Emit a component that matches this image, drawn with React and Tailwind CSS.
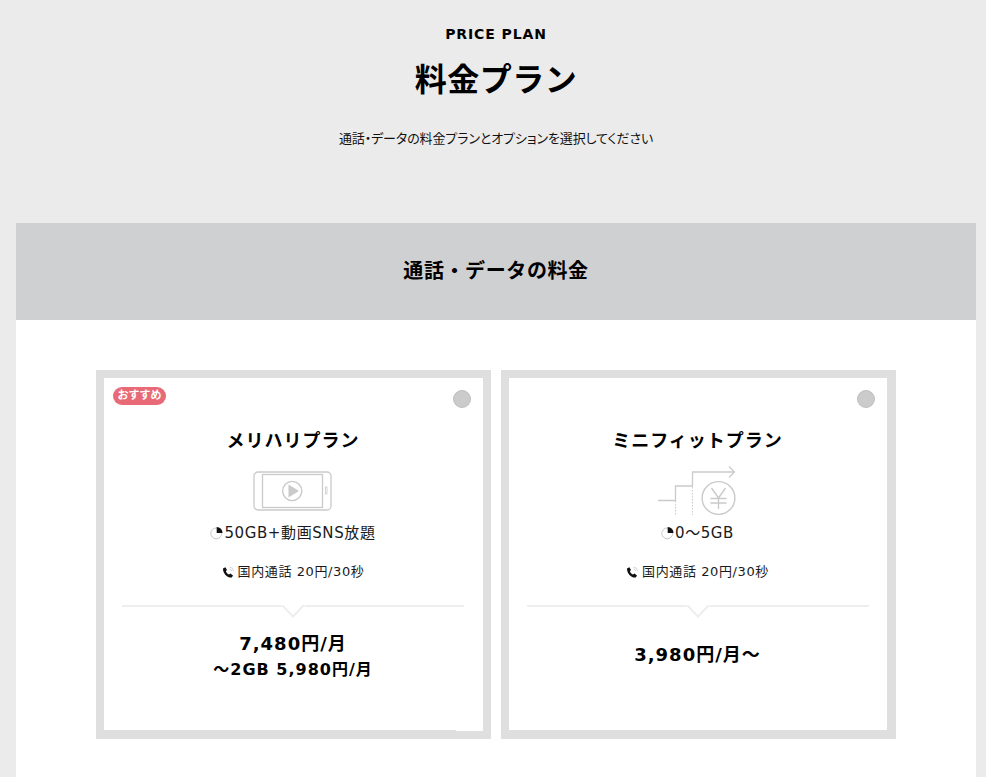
import { Fragment } from "react";

const jaFont = "font-['DejaVu_Sans','Noto_Sans_CJK_JP',sans-serif]";

function DataIcon() {
  return (
    <svg width="13" height="14" viewBox="0 0 13 14" className="shrink-0 mr-[1px]">
      <circle cx="6.2" cy="7.4" r="5.4" fill="none" stroke="#c8c8c8" strokeWidth="1" />
      <path d="M6.7 1 A5.9 5.9 0 0 1 12.6 6.9 L6.7 6.9 Z" fill="#111" />
    </svg>
  );
}

function PhoneIcon() {
  return (
    <svg width="13" height="13" viewBox="0 0 13 13" className="shrink-0">
      <path
        d="M1 2.4 L3.4 1.2 L5 4 L3.9 5.2 C4.4 6.6 5.6 7.9 7 8.6 L8.4 7.5 L11 9.4 L9.8 11.6 C5.4 12 .8 7.4 1 2.4 Z"
        fill="#111"
      />
      <path d="M7.5 1.2 A4 4 0 0 1 11.5 5.2 M7.5 3 A2.2 2.2 0 0 1 9.7 5.2" fill="none" stroke="#c4c4c4" strokeWidth=".7" />
    </svg>
  );
}

function PhoneVideoIcon() {
  return (
    <svg width="80" height="40" viewBox="0 0 80 40" fill="none" stroke="#cacaca">
      <rect x="1" y="1" width="77" height="38" rx="4" strokeWidth="1.3" />
      <rect x="9.5" y="3.5" width="60" height="33" strokeWidth="1.3" />
      <rect x="72.5" y="16" width="1.5" height="7" strokeWidth=".8" />
      <circle cx="39.2" cy="20" r="9.6" strokeWidth="1.4" />
      <path d="M35.5 13.5 L46 20 L35.5 26.5 Z" fill="#cacaca" stroke="none" />
    </svg>
  );
}

function StepYenIcon() {
  return (
    <svg width="80" height="50" viewBox="0 0 80 50" fill="none" stroke="#cacaca">
      <path d="M0 34.5 H17.5 V20 H34.5 V6 H76" strokeWidth="1.3" />
      <path d="M71 .5 L76.5 6 L71 11.5" strokeWidth="1.3" />
      <path d="M17.5 35 V49 M34.5 21 V49" strokeWidth="1" strokeDasharray="1.5 1.5" />
      <circle cx="60.5" cy="32" r="16.4" strokeWidth="1.4" />
      <path d="M53.5 22 L60.5 32 L67.5 22 M60.5 32 V43 M52.5 32.5 H68.5 M52.5 37 H68.5" strokeWidth="1.4" />
    </svg>
  );
}

function PlanCard({ name, recommended, icon, iconClass, data, prices, priceClass, notch, borderClass }) {
  return (
    <div className={`relative w-[395px] h-[369px] border-8 border-b-[9px] border-[#dfdfdf] bg-white flex flex-col items-center pr-[1px] ${borderClass}`}>
      {recommended && (
        <span className="absolute left-[9px] top-[9px] w-[53px] h-[18px] rounded-full bg-[#e86a76] text-white text-[11px] leading-[17px] font-bold text-center">
          おすすめ
        </span>
      )}
      <span className="absolute right-[12px] top-[12px] w-[18px] h-[18px] rounded-full bg-[#cbcbcb] border border-[#c0c0c0]" />
      <h3 className="mt-[50px] text-[18px] leading-[26px] font-bold text-black tracking-[1px]">{name}</h3>
      <div className={`flex justify-center ${iconClass}`}>{icon}</div>
      <p className="flex items-center justify-center h-[20px] text-[15px] text-[#1a1a1a] tracking-[0.6px]">
        <DataIcon />
        {data}
      </p>
      <p className="mt-[19px] flex items-center justify-center h-[20px] text-[13px] text-[#1a1a1a] tracking-[0.6px]">
        <PhoneIcon />
        <span className="ml-[3px]">国内通話 20円/30秒</span>
      </p>
      <div className="relative mt-[23px] w-[342px] h-[2px] bg-[#eeeeee]">
        <svg width="24" height="13" viewBox="0 0 24 13" className="absolute left-[159px] top-0">
          <path d="M0 0 H24 V1 L12 13 L0 1 Z" fill="#fff" />
          <path d="M1 0 L12 11.5 L23 0" fill="none" stroke="#eeeeee" strokeWidth="2" />
        </svg>
      </div>
      <div className={`text-center font-bold text-black tracking-[1px] ${priceClass}`}>
        {prices.map((p, i) => (
          <Fragment key={p}>
            <p className={i === 0 ? "text-[18px] leading-[26px]" : "text-[16px] leading-[26px]"}>{p}</p>
          </Fragment>
        ))}
      </div>
      {notch && <span className="absolute right-0 bottom-[-1px] w-[27px] h-[1px] bg-white" />}
    </div>
  );
}

export default function App() {
  return (
    <div className={`w-[986px] h-[777px] overflow-hidden bg-[#ebebeb] pl-4 pr-[10px] pt-[24px] ${jaFont}`}>
      <header className="h-[199px] flex flex-col items-center">
        <p className="text-[14px] leading-[20px] font-bold text-black tracking-[0.9px]">PRICE PLAN</p>
        <h1 className="mt-[14px] text-[32px] leading-[44px] font-bold text-black tracking-[0.5px]">料金プラン</h1>
        <p className="mt-[27px] text-[13px] leading-[20px] text-[#111] tracking-[-0.1px] [font-feature-settings:'palt']">
          通話・データの料金プランとオプションを選択してください
        </p>
      </header>
      <section className="bg-white h-[554px]">
        <h2 className="h-[97px] bg-[#cfd0d2] flex items-center justify-center text-[20px] font-bold text-black tracking-[0.6px] pb-[2px]">
          通話・データの料金
        </h2>
        <div className="pt-[50px] flex justify-center gap-[10px]">
          <PlanCard
            name="メリハリプラン"
            recommended
            notch
            icon={<PhoneVideoIcon />}
            iconClass="mt-[17px] mb-[12px]"
            data="50GB+動画SNS放題"
            prices={["7,480円/月", "〜2GB 5,980円/月"]}
            priceClass="mt-[24px]"
          />
          <PlanCard
            name="ミニフィットプラン"
            borderClass="border-r-[9px]"
            icon={<StepYenIcon />}
            iconClass="mt-[12px] mb-[7px]"
            data="0〜5GB"
            prices={["3,980円/月〜"]}
            priceClass="mt-[35px]"
          />
        </div>
      </section>
    </div>
  );
}
